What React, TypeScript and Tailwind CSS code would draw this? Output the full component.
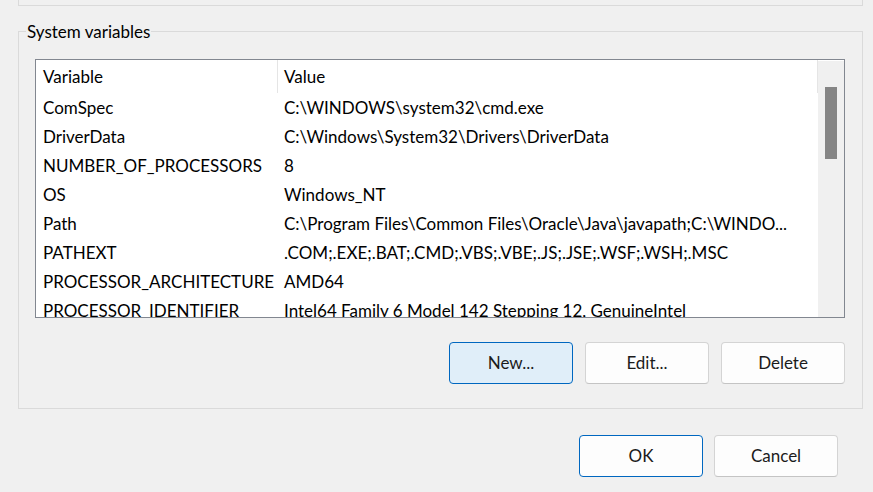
const rows: [string, string][] = [
  ['ComSpec', 'C:\\WINDOWS\\system32\\cmd.exe'],
  ['DriverData', 'C:\\Windows\\System32\\Drivers\\DriverData'],
  ['NUMBER_OF_PROCESSORS', '8'],
  ['OS', 'Windows_NT'],
  ['Path', 'C:\\Program Files\\Common Files\\Oracle\\Java\\javapath;C:\\WINDO...'],
  ['PATHEXT', '.COM;.EXE;.BAT;.CMD;.VBS;.VBE;.JS;.JSE;.WSF;.WSH;.MSC'],
  ['PROCESSOR_ARCHITECTURE', 'AMD64'],
  ['PROCESSOR_IDENTIFIER', 'Intel64 Family 6 Model 142 Stepping 12, GenuineIntel'],
];

function Button({ label, primary, focused }: { label: string; primary?: boolean; focused?: boolean }) {
  return (
    <button
      className={`w-[124px] h-[42px] rounded-[4px] border text-[17px] text-[#1b1b1b] ${
        primary ? 'border-[#0067c0]' : 'border-[#d4d4d4] border-b-[#c4c4c4]'
      } ${focused ? 'bg-[#e0eef9]' : 'bg-[#fdfdfd]'}`}
    >
      {label}
    </button>
  );
}

export default function App() {
  return (
    <div className="w-[873px] h-[492px] bg-[#f0f0f0] overflow-hidden flex flex-col font-[Lato,sans-serif] text-black">
      {/* bottom edge of the user variables group */}
      <div className="ml-[18px] w-[845px] h-[6px] border-x border-b border-[#dadada]" />

      <div className="relative mt-[25px] ml-[18px] w-[845px] h-[378px] border border-[#dadada] pl-[16px] pt-[27px]">
        <span className="absolute left-[7px] top-[-12px] px-[1px] bg-[#f0f0f0] text-[17px] leading-[24px]">
          System variables
        </span>

        <div className="w-[810px] h-[259px] border border-[#828790] bg-white flex overflow-hidden">
          <div className="w-[782px] overflow-hidden text-[17px]">
            <div className="flex h-[33px] items-center">
              <div className="w-[242px] h-full flex items-center pl-[7px] border-r border-[#e5e5e5]">Variable</div>
              <div className="flex-1 h-full flex items-center pl-[6px] border-r border-[#e5e5e5]">Value</div>
            </div>
            {rows.map(([name, value]) => (
              <div key={name} className="flex h-[29px] items-center whitespace-nowrap">
                <div className="w-[242px] pl-[7px]">{name}</div>
                <div className="flex-1 pl-[6px]">{value}</div>
              </div>
            ))}
          </div>
          <div className="w-[26px] mt-px bg-[#f0f0f0] flex justify-center pt-[26px]">
            <div className="w-[12px] h-[72px] bg-[#858585]" />
          </div>
        </div>

        <div className="w-[810px] mt-[24px] flex justify-end gap-[12px]">
          <Button label="New..." primary focused />
          <Button label="Edit..." />
          <Button label="Delete" />
        </div>
      </div>

      <div className="w-[838px] mt-[26px] flex justify-end gap-[11px]">
        <Button label="OK" primary />
        <Button label="Cancel" />
      </div>
    </div>
  );
}
